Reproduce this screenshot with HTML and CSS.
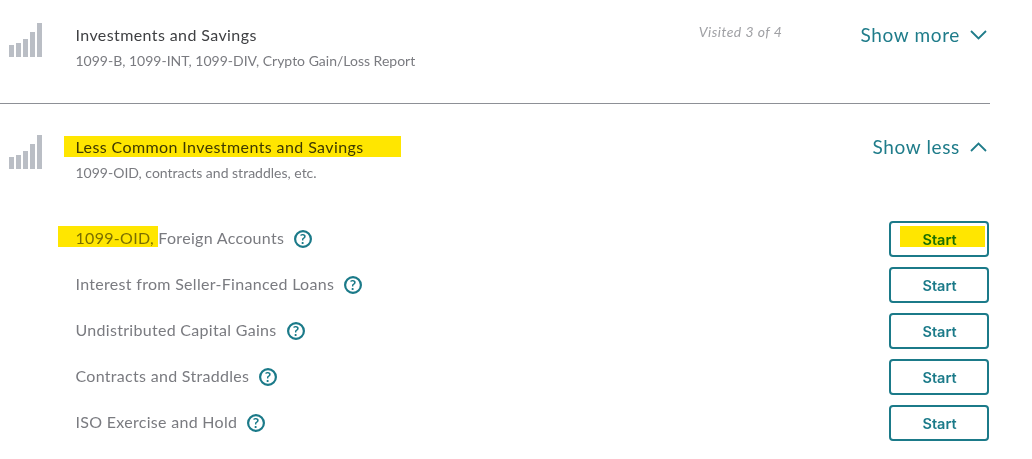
FILE: index.html
```html
<!DOCTYPE html>
<html lang="en">
<head>
<meta charset="utf-8">
<title>Investments and Savings</title>
<link rel="stylesheet" href="styles.css">
</head>
<body>
<main class="page">
  <section class="group group-first">
    <svg class="bars" width="34" height="35" viewBox="0 0 34 35" aria-hidden="true"><rect x="0" y="22" width="5" height="12"/><rect x="7" y="20" width="5" height="14"/><rect x="14" y="16" width="5" height="18"/><rect x="21" y="9" width="5" height="25"/><rect x="28" y="0" width="5" height="34"/></svg>
    <div class="heading">
      <h2 class="title">Investments and Savings</h2>
      <p class="sub">1099-B, 1099-INT, 1099-DIV, Crypto Gain/Loss Report</p>
    </div>
    <span class="visited">Visited 3 of 4</span>
    <a class="toggle">Show more
      <svg width="17" height="10" viewBox="0 0 17 10" aria-hidden="true"><path d="M1 1l7.5 7.5L16 1" class="chev"/></svg>
    </a>
  </section>
  <section class="group group-second">
    <svg class="bars" width="34" height="35" viewBox="0 0 34 35" aria-hidden="true"><rect x="0" y="22" width="5" height="12"/><rect x="7" y="20" width="5" height="14"/><rect x="14" y="16" width="5" height="18"/><rect x="21" y="9" width="5" height="25"/><rect x="28" y="0" width="5" height="34"/></svg>
    <div class="heading">
      <h2 class="title">Less Common Investments and Savings</h2>
      <p class="sub">1099-OID, contracts and straddles, etc.</p>
    </div>
    <a class="toggle">Show less
      <svg width="17" height="10" viewBox="0 0 17 10" aria-hidden="true"><path d="M1 9l7.5-7.5L16 9" class="chev"/></svg>
    </a>
  </section>
  <ul class="rows">
    <li class="row"><span class="label">1099-OID, Foreign Accounts</span><svg class="help" width="18" height="18" viewBox="0 0 18 18" aria-hidden="true"><circle cx="9" cy="9" r="7.9"/><text x="9" y="13.8" text-anchor="middle">?</text></svg><button class="start">Start</button></li>
    <li class="row"><span class="label">Interest from Seller-Financed Loans</span><svg class="help" width="18" height="18" viewBox="0 0 18 18" aria-hidden="true"><circle cx="9" cy="9" r="7.9"/><text x="9" y="13.8" text-anchor="middle">?</text></svg><button class="start">Start</button></li>
    <li class="row"><span class="label">Undistributed Capital Gains</span><svg class="help" width="18" height="18" viewBox="0 0 18 18" aria-hidden="true"><circle cx="9" cy="9" r="7.9"/><text x="9" y="13.8" text-anchor="middle">?</text></svg><button class="start">Start</button></li>
    <li class="row"><span class="label">Contracts and Straddles</span><svg class="help" width="18" height="18" viewBox="0 0 18 18" aria-hidden="true"><circle cx="9" cy="9" r="7.9"/><text x="9" y="13.8" text-anchor="middle">?</text></svg><button class="start">Start</button></li>
    <li class="row"><span class="label">ISO Exercise and Hold</span><svg class="help" width="18" height="18" viewBox="0 0 18 18" aria-hidden="true"><circle cx="9" cy="9" r="7.9"/><text x="9" y="13.8" text-anchor="middle">?</text></svg><button class="start">Start</button></li>
  </ul>
  <div class="mark mark-title"></div>
  <div class="mark mark-form"></div>
  <div class="mark mark-start"></div>
</main>
</body>
</html>
```
FILE: styles.css
```css
* { box-sizing: border-box; }
html, body { margin: 0; padding: 0; background: #fff; }
body { font-family: "Lato", "Noto Sans", sans-serif; color: #393a3d; overflow: hidden; }
.page { position: relative; width: 1032px; height: 459px; padding-right: 42px; }

.group { display: flex; align-items: flex-start; }
.group-first { height: 104px; padding-top: 23px; border-bottom: 1px solid #8d9096; }
.group-second { height: 117px; padding-top: 31px; }

.bars { flex: none; margin-left: 9px; fill: #babec5; }
.heading { margin-left: 32.5px; flex: 1; }
.title { margin: 1px 0 0; font-size: 16px; line-height: 22px; font-weight: 400; letter-spacing: 0.4px; color: #3f4043; }
.sub { margin: 4px 0 0; font-size: 14px; line-height: 22px; color: #7a7b80; }

.visited { margin-right: 78px; font-size: 14px; line-height: 18px; font-style: italic; letter-spacing: 0.45px; color: #a0a1a5; }
.toggle { display: flex; align-items: center; gap: 10px; padding-right: 3px; height: 23px; font-size: 19px; letter-spacing: 0.65px; color: #1f7c8a; }
.chev { fill: none; stroke: #1f7c8a; stroke-width: 1.8; }

.rows { list-style: none; margin: 0; padding: 0; display: flex; flex-direction: column; gap: 10px; }
.row { display: flex; align-items: center; height: 36px; padding-left: 75.5px; }
.label { font-size: 16px; line-height: 33px; margin-bottom: 3px; letter-spacing: 0.3px; color: #7a7b80; }
.help { flex: none; margin-left: 10px; }
.help circle { fill: none; stroke: #1b7a89; stroke-width: 2.2; }
.help text { font-family: "Lato", sans-serif; font-size: 14px; font-weight: 700; fill: #1b7a89; }
.start { margin-left: auto; margin-right: 1px; width: 100px; height: 36px; border: 2px solid #1b7a89; border-radius: 4px; background: #fff; font-family: "Inter", "Lato", sans-serif; font-size: 14.5px; font-weight: 600; color: #1b7a89; padding: 0 0 0 1px; }

.mark { position: absolute; background: #ffe600; mix-blend-mode: multiply; }
.mark-title { left: 64px; top: 136px; width: 337px; height: 21px; }
.mark-form { left: 58px; top: 226px; width: 100px; height: 21px; }
.mark-start { left: 900px; top: 226px; width: 85px; height: 21px; }
```
